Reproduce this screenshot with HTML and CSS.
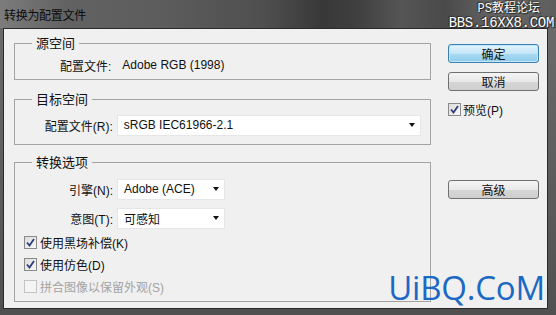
FILE: index.html
```html
<!DOCTYPE html>
<html lang="zh-CN">
<head>
    <meta charset="UTF-8">
    <title>转换为配置文件</title>
    <link rel="stylesheet" href="styles.css">
</head>
<body>
    <div class="window">
        <div class="titlebar">
            <span class="title">转换为配置文件</span>
        </div>

        <div class="frame">
            <div class="panel">
                <div class="groups">
                    <fieldset class="group group-source">
                        <legend>源空间</legend>
                        <div class="info-row">
                            <span class="info-label">配置文件:</span>
                            <span class="info-value">Adobe RGB (1998)</span>
                        </div>
                    </fieldset>

                    <fieldset class="group group-target">
                        <legend>目标空间</legend>
                        <div class="field-row">
                            <span class="field-label">配置文件(R):</span>
                            <div class="dropdown dropdown-wide">
                                <span>sRGB IEC61966-2.1</span>
                                <span class="arrow"></span>
                            </div>
                        </div>
                    </fieldset>

                    <fieldset class="group group-options">
                        <legend>转换选项</legend>
                        <div class="field-row">
                            <span class="field-label">引擎(N):</span>
                            <div class="dropdown dropdown-small">
                                <span>Adobe (ACE)</span>
                                <span class="arrow"></span>
                            </div>
                        </div>
                        <div class="field-row">
                            <span class="field-label">意图(T):</span>
                            <div class="dropdown dropdown-small">
                                <span>可感知</span>
                                <span class="arrow"></span>
                            </div>
                        </div>
                        <label class="check-row">
                            <span class="checkbox checked">
                                <svg width="9" height="9" viewBox="0 0 9 9"><path d="M1 4.5 L3.5 7.5 L8 1" fill="none" stroke="#2a3f75" stroke-width="1.8"/></svg>
                            </span>
                            使用黑场补偿(K)
                        </label>
                        <label class="check-row">
                            <span class="checkbox checked">
                                <svg width="9" height="9" viewBox="0 0 9 9"><path d="M1 4.5 L3.5 7.5 L8 1" fill="none" stroke="#2a3f75" stroke-width="1.8"/></svg>
                            </span>
                            使用仿色(D)
                        </label>
                        <label class="check-row disabled">
                            <span class="checkbox"></span>
                            拼合图像以保留外观(S)
                        </label>
                    </fieldset>
                </div>

                <div class="actions">
                    <button class="btn btn-default">确定</button>
                    <button class="btn">取消</button>
                    <label class="check-row preview">
                        <span class="checkbox checked">
                            <svg width="9" height="9" viewBox="0 0 9 9"><path d="M1 4.5 L3.5 7.5 L8 1" fill="none" stroke="#2a3f75" stroke-width="1.8"/></svg>
                        </span>
                        预览(P)
                    </label>
                    <button class="btn btn-advanced">高级</button>
                </div>
            </div>
        </div>

        <!-- watermarks -->
        <div class="mark-top">
            <svg class="mark-close" width="10" height="9" viewBox="0 0 10 9"><path d="M1 1 L9 8 M9 1 L1 8" stroke="#d8d8d8" stroke-width="2"/></svg>
            <span class="mark-cn">PS教程论坛</span>
            <span class="mark-url">BBS.16XX8.COM</span>
        </div>
        <div class="mark-uibq">UiBQ.CoM</div>
    </div>
</body>
</html>
```

FILE: styles.css
```css
* {
    margin: 0;
    padding: 0;
    box-sizing: border-box;
}

html, body {
    width: 556px;
    height: 315px;
    overflow: hidden;
    background: #5f5f5f;
}

body {
    font-family: 'Liberation Sans', 'Noto Sans CJK SC', sans-serif;
    font-size: 12px;
    color: #111;
}

.window {
    position: relative;
    width: 556px;
    height: 315px;
    display: flex;
    flex-direction: column;
}

.titlebar {
    height: 28px;
    flex: none;
    display: flex;
    align-items: center;
    padding-left: 4px;
    background: linear-gradient(90deg, #7c7c7c 0%, #626262 12%, #5c5c5c 30%, #4e4e4e 48%, #383838 58%, #3f3f3f 64%, #555 72%, #4a4a4a 80%, #676767 90%, #5e5e5e 100%);
}

.title {
    font-size: 12px;
    color: #0c0c0c;
    letter-spacing: -0.3px;
}

.frame {
    flex: 1;
    padding: 0 8px 6px 3px;
    background: linear-gradient(180deg, #6a6a6a, #505050);
}

.panel {
    height: 100%;
    background: #f0f0f0;
    border: 1px solid #2a2a2a;
    display: flex;
    gap: 17px;
    padding: 6px 8px 0 10px;
}

.groups {
    width: 417px;
    display: flex;
    flex-direction: column;
}

.group {
    border: 1px solid #a3a3a3;
    padding: 0 9px 0 8px;
    min-width: 0;
}

.group legend {
    margin-left: 9px;
    padding: 0 4px;
    font-size: 13px;
    line-height: 17px;
    color: #111;
}

.group-source {
    padding-top: 5px;
    padding-bottom: 6px;
}

.group-target {
    margin-top: 11px;
    padding-top: 6px;
    padding-bottom: 8px;
}

.group-options {
    margin-top: 9px;
    padding-top: 7px;
    padding-bottom: 4px;
}

.info-row {
    display: flex;
    align-items: center;
    height: 16px;
    padding-left: 37px;
}

.info-value {
    margin-left: 11px;
}

.field-row {
    display: flex;
    align-items: center;
    height: 22px;
}

.group-options .field-row {
    margin-bottom: 7px;
}

.group-options .field-row + .field-row {
    margin-bottom: 2px;
}

.field-label {
    width: 91px;
    text-align: right;
    padding-right: 1px;
    margin-right: 3px;
}

.dropdown {
    height: 21px;
    background: #fff;
    border: 1px solid #e6e6e6;
    display: flex;
    align-items: center;
    justify-content: space-between;
    padding: 0 5px 0 6px;
}

.dropdown-wide {
    width: 305px;
}

.dropdown-small {
    width: 108px;
}

.arrow {
    width: 0;
    height: 0;
    border-left: 3.5px solid transparent;
    border-right: 3.5px solid transparent;
    border-top: 4px solid #111;
}

.check-row {
    display: flex;
    align-items: center;
    height: 22px;
    gap: 3px;
}

.check-row.disabled {
    color: #a4a4a4;
}

.checkbox {
    width: 13px;
    height: 13px;
    border: 1px solid #8a8a8a;
    background: linear-gradient(135deg, #dcdcdc, #f8f8f8);
    display: flex;
    align-items: center;
    justify-content: center;
    margin-left: 1px;
}

.disabled .checkbox {
    border-color: #c4c4c4;
    background: #f4f4f4;
}

.actions {
    width: 91px;
    display: flex;
    flex-direction: column;
    padding-top: 9px;
}

.btn {
    height: 19px;
    width: 91px;
    font-family: inherit;
    font-size: 12px;
    color: #111;
    border: 1px solid #707070;
    border-radius: 3px;
    background: linear-gradient(180deg, #f4f4f4 0%, #e8e8e8 50%, #d6d6d6 51%, #cfcfcf 100%);
}

.btn-default {
    border-color: #3c7fb1;
    background: linear-gradient(180deg, #e3f4fc 0%, #c4e5f6 50%, #a9daf3 51%, #8fcbea 100%);
    box-shadow: inset 0 0 0 1px #bfe6f8;
    margin-bottom: 9px;
}

.preview {
    margin-top: 7px;
    gap: 2px;
}

.preview .checkbox {
    margin-left: 0;
}

.btn-advanced {
    margin-top: 60px;
}

.mark-top {
    position: absolute;
    top: 2px;
    right: 2px;
    width: 112px;
    display: flex;
    flex-direction: column;
    align-items: flex-end;
    color: #fff;
    text-shadow: 0 0 1px #222, 1px 1px 1px #222, -1px -1px 1px #333;
}

.mark-close {
    position: absolute;
    top: 0;
    right: 54px;
}

.mark-cn {
    position: relative;
    font-family: 'Liberation Mono', 'Noto Sans CJK SC', monospace;
    font-size: 12px;
    line-height: 15px;
    margin-right: 14px;
}

.mark-url {
    font-family: 'Liberation Mono', monospace;
    font-size: 14px;
    line-height: 13px;
    letter-spacing: -0.3px;
}

.mark-uibq {
    position: absolute;
    right: 11px;
    bottom: 11px;
    font-family: 'Open Sans', sans-serif;
    font-size: 33px;
    line-height: 33px;
    color: #1b69c4;
    letter-spacing: -0.2px;
}
```
